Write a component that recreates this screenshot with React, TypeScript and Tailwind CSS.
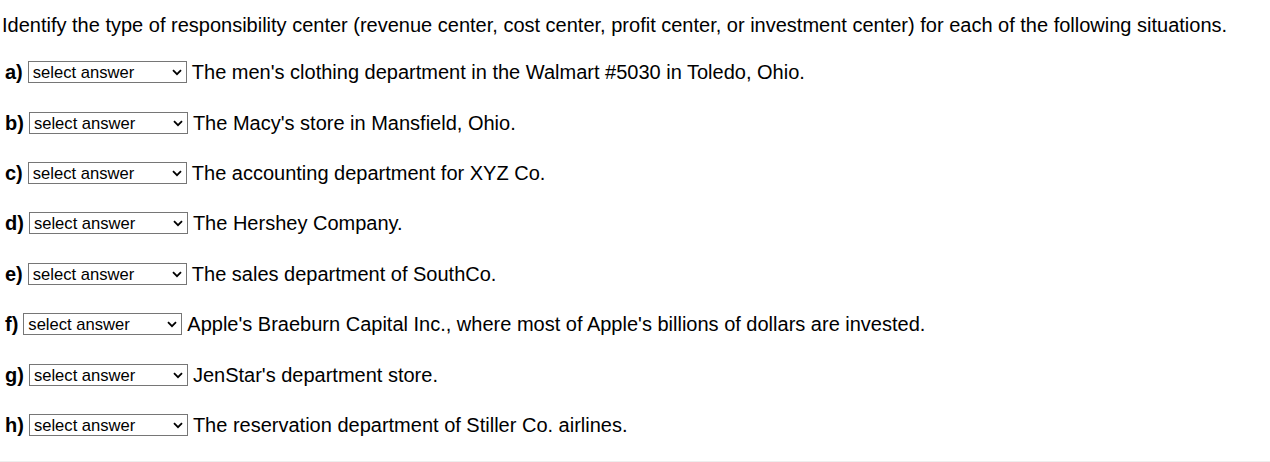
import React from "react";

const items: { label: string; text: string }[] = [
  { label: "a)", text: "The men's clothing department in the Walmart #5030 in Toledo, Ohio." },
  { label: "b)", text: "The Macy's store in Mansfield, Ohio." },
  { label: "c)", text: "The accounting department for XYZ Co." },
  { label: "d)", text: "The Hershey Company." },
  { label: "e)", text: "The sales department of SouthCo." },
  { label: "f)", text: "Apple's Braeburn Capital Inc., where most of Apple's billions of dollars are invested." },
  { label: "g)", text: "JenStar's department store." },
  { label: "h)", text: "The reservation department of Stiller Co. airlines." },
];

function AnswerSelect() {
  return (
    <div className="relative h-[22px] w-[159px] shrink-0">
      <select
        defaultValue=""
        className="block h-[22px] w-full appearance-none border border-[#767676] bg-white pt-[2px] pb-0 pl-[4px] text-[16.6px] leading-[18px] text-black outline-none"
      >
        <option value="">select answer</option>
        <option value="revenue">revenue center</option>
        <option value="cost">cost center</option>
        <option value="profit">profit center</option>
        <option value="investment">investment center</option>
      </select>
      {/* native-looking chevron */}
      <svg
        className="pointer-events-none absolute right-[5px] top-[8px]"
        width="10"
        height="7"
        viewBox="0 0 10 7"
        fill="none"
      >
        <path d="M1 1.2 L5 5.2 L9 1.2" stroke="#000" strokeWidth="1.8" />
      </svg>
    </div>
  );
}

export default function App() {
  return (
    <div className="h-[462px] w-full overflow-hidden bg-white font-['Liberation_Sans',Arial,sans-serif] text-black">
      <div className="flex h-[461px] flex-col">
        <p className="mt-[14px] pl-[2px] text-[20px] leading-[23px]">
          Identify the type of responsibility center (revenue center, cost center, profit center, or investment center) for each of the following situations.
        </p>

        <div className="mt-[10px] flex flex-col">
          {items.map((item) => (
            <div key={item.label} className="flex h-[50.43px] items-center gap-[5px] pl-[5px] text-[20px]">
              <span className="font-bold">{item.label}</span>
              <AnswerSelect />
              <span>{item.text}</span>
            </div>
          ))}
        </div>
      </div>
      <div className="h-px w-full bg-[#eeeeee]" />
    </div>
  );
}
